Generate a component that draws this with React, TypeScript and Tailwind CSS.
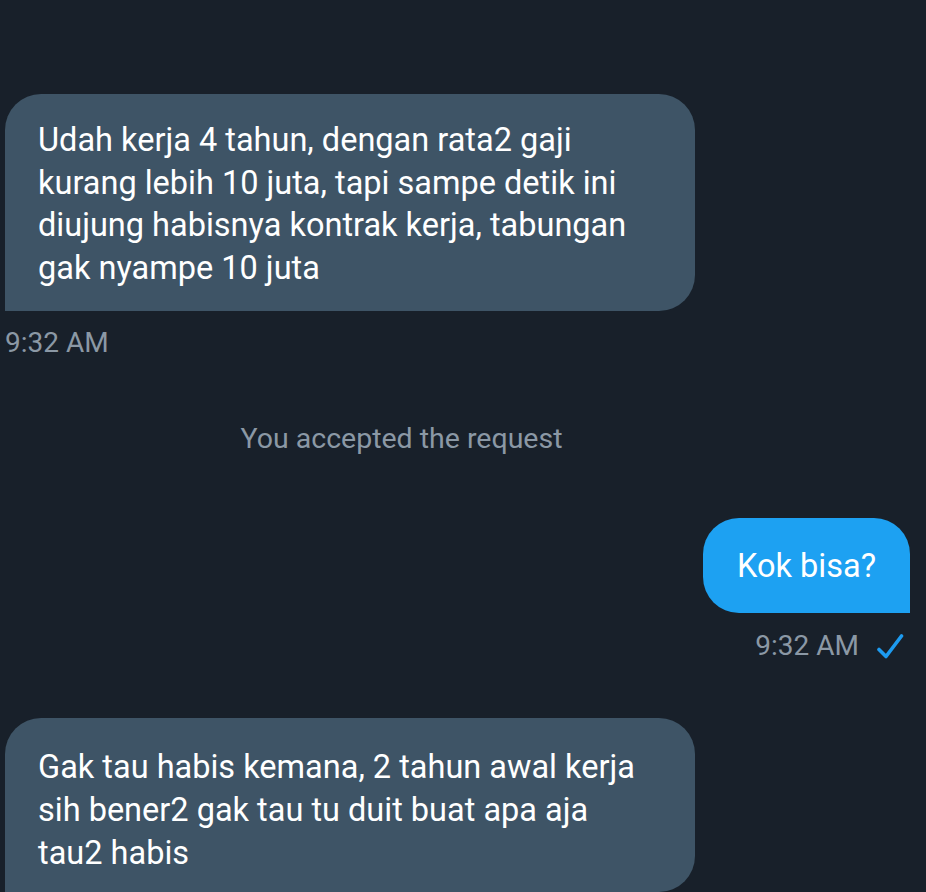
import { ReactNode } from 'react'

const font = { fontFamily: 'Roboto, "Noto Sans", sans-serif' }

function Incoming({ children, className = '' }: { children: ReactNode; className?: string }) {
  return (
    <div
      className={`ml-[5px] w-[690px] shrink-0 rounded-[36px] rounded-bl-none bg-[#3e5466] pl-[33px] pr-[20px] text-[32.5px] leading-[42.6px] text-white ${className}`}
    >
      {children}
    </div>
  )
}

function Check() {
  return (
    <svg width="28" height="28" viewBox="0 0 28 28" fill="none" className="text-[#1d9bf0]">
      <path d="M3 17.5 L10 24.5 L25.5 4" stroke="currentColor" strokeWidth="3.6" strokeLinecap="round" strokeLinejoin="round" />
    </svg>
  )
}

export default function App() {
  return (
    <div style={font} className="flex h-[892px] w-[926px] flex-col overflow-hidden bg-[#18202a]">
      <Incoming className="mt-[94px] pb-[22px] pt-[25px]">
        Udah kerja 4 tahun, dengan rata2 gaji
        <br />
        kurang lebih 10 juta, tapi sampe detik ini
        <br />
        diujung habisnya kontrak kerja, tabungan
        <br />
        gak nyampe 10 juta
      </Incoming>
      <div className="ml-[5px] mt-[15px] text-[28px] leading-[34px] text-[#8b98a5]">9:32 AM</div>

      <div className="mt-[62px] pr-[123px] text-center text-[28.5px] leading-[34px] text-[#8b98a5]">
        You accepted the request
      </div>

      <div className="mt-[62px] flex justify-end pr-[16px]">
        <div className="flex h-[95px] items-center rounded-[36px] rounded-br-none bg-[#1da1f2] px-[34px] text-[32.5px] text-white">
          Kok bisa?
        </div>
      </div>
      <div className="mt-[16px] flex items-center justify-end gap-[17px] pr-[22px]">
        <span className="text-[28px] leading-[34px] text-[#8b98a5]">9:32 AM</span>
        <Check />
      </div>

      <Incoming className="mt-[55px] h-[174px] pt-[28px]">
        Gak tau habis kemana, 2 tahun awal kerja
        <br />
        sih bener2 gak tau tu duit buat apa aja
        <br />
        tau2 habis
      </Incoming>
    </div>
  )
}
